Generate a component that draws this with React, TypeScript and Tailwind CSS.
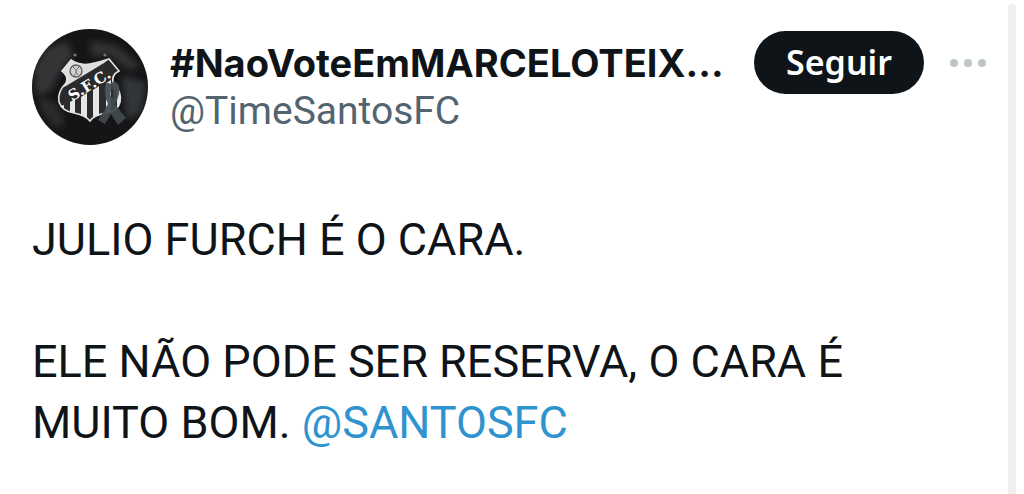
function Avatar() {
  return (
    <svg viewBox="0 0 116 116" className="size-[116px] shrink-0" role="img" aria-label="Santos FC">
      <defs>
        <clipPath id="circle">
          <circle cx="58" cy="58" r="58" />
        </clipPath>
        <clipPath id="shield">
          <path d="M39 31Q48 37 58 35Q68 33 77 30L87 42Q79 46 81 54Q90 62 88 73Q86 82 74 84Q62 86 58 92Q53 86 42 84Q30 82 27 73Q25 63 34 54Q37 47 30 42Z" />
        </clipPath>
        <filter id="smoke" x="-20%" y="-20%" width="140%" height="140%">
          <feGaussianBlur stdDeviation="3" />
        </filter>
      </defs>
      <g clipPath="url(#circle)">
        <rect width="116" height="116" fill="#151517" />
        {/* smoke */}
        <g filter="url(#smoke)">
          <path d="M14 20L34 12L42 26L30 40L18 62L4 66L2 40Z" fill="#363639" />
          <path d="M58 12L84 16L108 36L98 42L76 26L60 28Z" fill="#303033" />
          <path d="M90 46L114 54L110 84L94 90Z" fill="#333437" />
          <path d="M6 66L24 74L34 96L22 98L10 84Z" fill="#29292b" />
        </g>
        {/* crest */}
        <g clipPath="url(#shield)">
          <rect x="22" y="26" width="70" height="70" fill="#2b2a2c" />
          <path d="M26 26H82L72 34L34 57L24 62Z" fill="#dededf" />
          <circle cx="44" cy="42" r="6" fill="#cfcfd0" stroke="#5c5c5f" strokeWidth="1.3" />
          <path d="M41 38Q47 42 42 47M47 38Q42 42 46 46" fill="none" stroke="#77777a" strokeWidth="1" />
          <path
            d="M28 77L32 76V90H28ZM38 73L43 70V90H38ZM49 68L55 64V94H49ZM61 61L67 57V92H61ZM74 54L79 51V88H74ZM85 58L90 56V88H85Z"
            fill="#e6e6e7"
          />
        </g>
        <path
          d="M39 31Q48 37 58 35Q68 33 77 30L87 42Q79 46 81 54Q90 62 88 73Q86 82 74 84Q62 86 58 92Q53 86 42 84Q30 82 27 73Q25 63 34 54Q37 47 30 42Z"
          fill="none"
          stroke="#e3e3e4"
          strokeWidth="1.6"
        />
        <text
          x="57"
          y="61"
          textAnchor="middle"
          transform="rotate(-32 57 55)"
          className="fill-white font-['DejaVu_Serif',serif] text-[15px] font-bold"
        >
          S.F.C.
        </text>
        <circle cx="43" cy="26" r="1.5" fill="#77777a" />
        <circle cx="73" cy="26" r="1.5" fill="#77777a" />
        {/* ribbon */}
        <path
          d="M78 55Q83 50 87 56Q89 65 83 75L94 89L86 96L79 85L73 95L66 91L76 75Q71 64 73 56Q75 52 78 55ZM80 59Q77 65 80 70Q83 65 80 59Z"
          fill="#414a4f"
          fillOpacity="0.93"
          fillRule="evenodd"
        />
      </g>
    </svg>
  );
}

export default function App() {
  return (
    <div className="flex min-h-screen bg-white pr-2 font-[Inter,sans-serif] text-[#0f1419]">
      <article className="min-w-0 flex-1 pt-[29px] pr-[22px] pl-8">
        <header className="flex items-start">
          <Avatar />
          <div className="ml-[22px] min-w-0 flex-1 pt-[10px] leading-[48px]">
            <h1 className="text-[38px] font-bold whitespace-nowrap">#NaoVoteEmMARCELOTEIX...</h1>
            <p className="font-[Roboto,sans-serif] text-[39px] text-[#536471]">@TimeSantosFC</p>
          </div>
          <button
            type="button"
            className="mt-[2px] h-[63px] w-[170px] shrink-0 rounded-full bg-[#0f1419] font-['Noto_Sans',sans-serif] text-[34px] font-semibold text-white"
          >
            Seguir
          </button>
          <button type="button" aria-label="Mais" className="mt-[30px] ml-[26px] flex shrink-0 gap-[6px]">
            <span className="size-2 rounded-full bg-[#bcc5c8]" />
            <span className="size-2 rounded-full bg-[#bcc5c8]" />
            <span className="size-2 rounded-full bg-[#bcc5c8]" />
          </button>
        </header>

        <div className="mt-16 font-[Roboto,sans-serif] text-[45px] leading-[61px]">
          <p>JULIO FURCH É O CARA.</p>
          <p className="mt-[61px]">
            ELE NÃO PODE SER RESERVA, O CARA É
            <br />
            MUITO BOM.{' '}
            <a href="#santosfc" className="text-[#2f93cf]">
              @SANTOSFC
            </a>
          </p>
        </div>
      </article>

      {/* scrollbar track */}
      <div className="mt-1 w-2 shrink-0 rounded-t-sm bg-[#efefef]" />
    </div>
  );
}
